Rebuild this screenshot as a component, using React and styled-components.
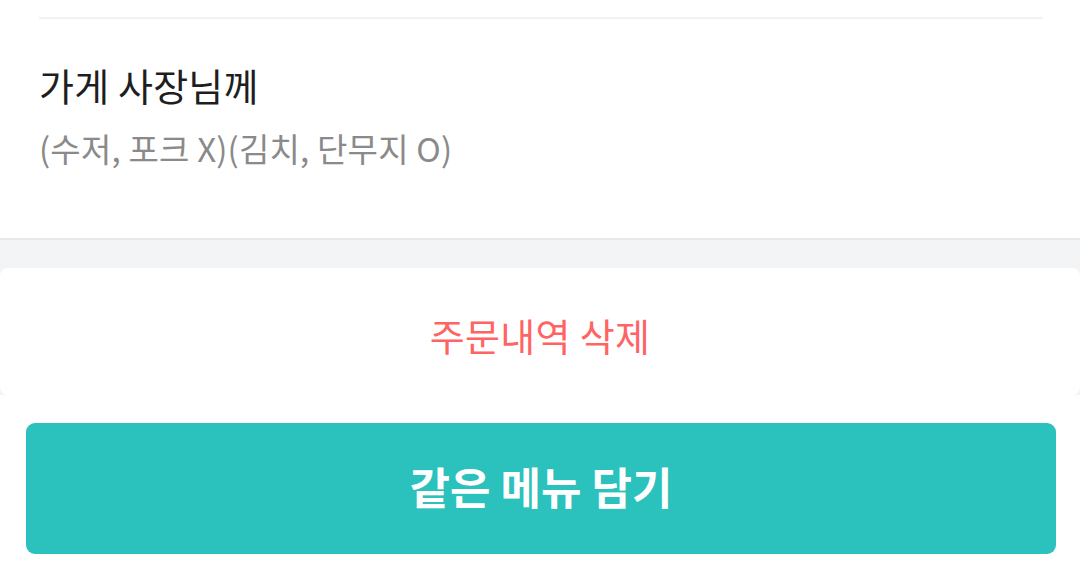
import React from "react";
import styled, { createGlobalStyle } from "styled-components";

const Global = createGlobalStyle`
  html, body { margin: 0; padding: 0; background: #ffffff; }
  body { font-family: "Noto Sans CJK KR", "Noto Sans", sans-serif; }
  * { box-sizing: border-box; }
`;

const Page = styled.div`
  width: 1080px;
  height: 578px;
  display: flex;
  flex-direction: column;
  overflow: hidden;
  background: #ffffff;
`;

const InfoSection = styled.section`
  background: #ffffff;
  padding: 17px 37px 0 39px;
  height: 241px;
  border-bottom: 2px solid #e8e8e8;
  display: flex;
  flex-direction: column;
`;

const Divider = styled.div`
  height: 2px;
  background: #f2f2f2;
`;

const Request = styled.div`
  display: flex;
  flex-direction: column;
  padding-top: 42px;
  gap: 17px;
`;

const Title = styled.h3`
  margin: 0;
  font-size: 38px;
  font-weight: 400;
  line-height: 48px;
  color: #1e1e1e;
  letter-spacing: 0.2px;
`;

const Sub = styled.p`
  margin: 0;
  font-size: 33px;
  font-weight: 400;
  line-height: 44px;
  color: #8a8a8a;
  letter-spacing: 0.2px;
`;

const GrayArea = styled.div`
  background: #f3f4f6;
  padding-top: 28px;
`;

const Card = styled.div`
  background: #ffffff;
  height: 127px;
  padding-top: 6px;
  border-radius: 8px;
  display: flex;
  align-items: center;
  justify-content: center;
`;

const DeleteText = styled.button`
  border: none;
  background: none;
  padding: 0;
  font-family: inherit;
  font-size: 38px;
  font-weight: 400;
  color: #ff6464;
  letter-spacing: 0.3px;
  cursor: pointer;
`;

const BottomBar = styled.div`
  background: #ffffff;
  padding: 28px 24px 24px 26px;
  flex: 1;
  display: flex;
`;

const PrimaryButton = styled.button`
  width: 100%;
  height: 131px;
  border: none;
  border-radius: 9px;
  background: #2bc1bc;
  color: #ffffff;
  padding: 0 0 6px;
  font-family: inherit;
  font-size: 44px;
  font-weight: 700;
  letter-spacing: 0;
  cursor: pointer;
`;

export default function App() {
  return (
    <Page>
      <Global />
      <InfoSection>
        <Divider />
        <Request>
          <Title>가게 사장님께</Title>
          <Sub>(수저, 포크 X)(김치, 단무지 O)</Sub>
        </Request>
      </InfoSection>
      <GrayArea>
        <Card>
          <DeleteText>주문내역 삭제</DeleteText>
        </Card>
      </GrayArea>
      <BottomBar>
        <PrimaryButton>같은 메뉴 담기</PrimaryButton>
      </BottomBar>
    </Page>
  );
}
